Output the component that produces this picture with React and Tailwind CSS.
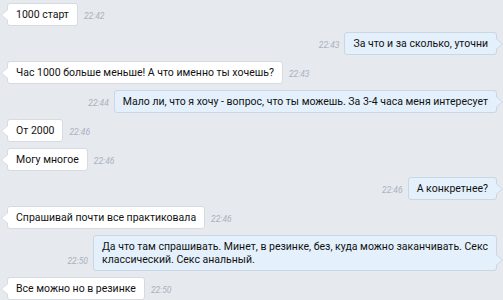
const messages = [
  { out: false, text: "1000 старт", time: "22:42" },
  { out: true, text: "За что и за сколько, уточни", time: "22:43" },
  { out: false, text: "Час 1000 больше меньше! А что именно ты хочешь?", time: "22:43" },
  { out: true, text: "Мало ли, что я хочу - вопрос, что ты можешь. За 3-4 часа меня интересует", time: "22:44" },
  { out: false, text: "От 2000", time: "22:46" },
  { out: false, text: "Могу многое", time: "22:46" },
  { out: true, text: "А конкретнее?", time: "22:46" },
  { out: false, text: "Спрашивай почти все практиковала", time: "22:46" },
  {
    out: true,
    lines: [
      "Да что там спрашивать. Минет, в резинке, без, куда можно заканчивать. Секс",
      "классический. Секс анальный.",
    ],
    time: "22:50",
  },
  { out: false, text: "Все можно но в резинке", time: "22:50" },
]

const Time = ({ children }) => (
  <span className="mb-[5px] text-[8.5px] italic leading-[10px] text-[#a9b3bf]">{children}</span>
)

const Bubble = ({ out, children }) => (
  <div
    className={`relative max-w-[420px] whitespace-nowrap rounded-[3px] border px-[8px] py-[4px] text-[10.5px] leading-[13px] text-[#111] ${
      out ? "border-[#c9d6e3] bg-[#e4f0fb]" : "border-[#d6dbe1] bg-white"
    }`}
  >
    {out ? (
      <>
        <span className="absolute right-[-7px] bottom-[5px] h-0 w-0 border-y-[5px] border-l-[6px] border-y-transparent border-l-[#c9d6e3]" />
        <span className="absolute right-[-6px] bottom-[5px] h-0 w-0 border-y-[5px] border-l-[6px] border-y-transparent border-l-[#e4f0fb]" />
      </>
    ) : (
      <>
        <span className="absolute left-[-7px] bottom-[5px] h-0 w-0 border-y-[5px] border-r-[6px] border-y-transparent border-r-[#d6dbe1]" />
        <span className="absolute left-[-6px] bottom-[5px] h-0 w-0 border-y-[5px] border-r-[6px] border-y-transparent border-r-white" />
      </>
    )}
    {children}
  </div>
)

const Body = ({ m }) =>
  m.lines
    ? m.lines.map((l, i) => (
        <span key={i}>
          {i > 0 && <br />}
          {l}
        </span>
      ))
    : m.text

export default function App() {
  return (
    <div
      className="flex h-[300px] w-[503px] flex-col gap-[6px] overflow-hidden bg-[#e6e9ee] pt-[3px] pl-[7px] pr-[6px]"
      style={{ fontFamily: "Roboto, 'Noto Sans', sans-serif" }}
    >
      {messages.map((m, i) =>
        m.out ? (
          <div key={i} className="flex items-end justify-end gap-[5px]">
            <Time>{m.time}</Time>
            <Bubble out>
              <Body m={m} />
            </Bubble>
          </div>
        ) : (
          <div key={i} className="flex items-end gap-[6px]">
            <Bubble>
              <Body m={m} />
            </Bubble>
            <Time>{m.time}</Time>
          </div>
        )
      )}
    </div>
  )
}
